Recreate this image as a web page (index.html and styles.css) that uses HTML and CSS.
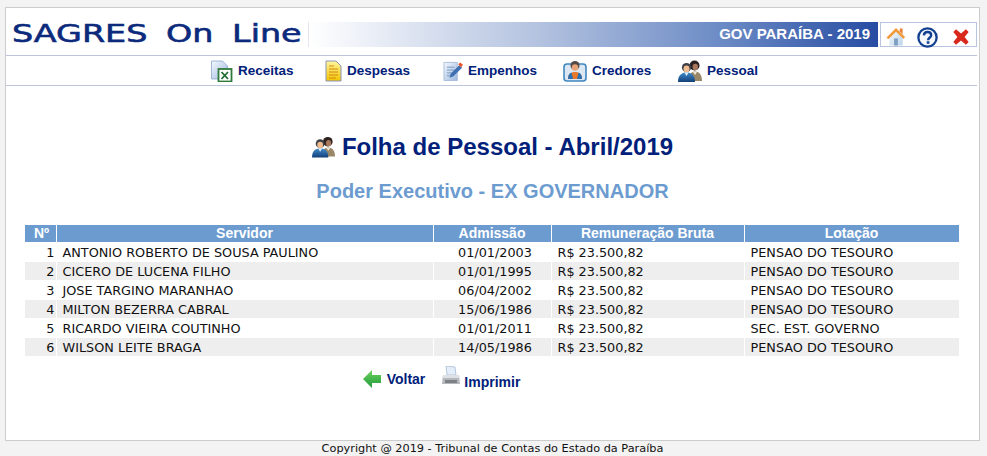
FILE: index.html
```html
<!DOCTYPE html>
<html lang="pt">
<head>
<meta charset="utf-8">
<title>Sagres On Line</title>
<link rel="stylesheet" href="styles.css">
</head>
<body>
<svg class="defs" width="0" height="0" aria-hidden="true">
  <defs>
    <linearGradient id="gPage" x1="0" y1="0" x2="1" y2="1"><stop offset="0" stop-color="#f4f8fd"/><stop offset="1" stop-color="#9db8e0"/></linearGradient>
    <linearGradient id="gYellow" x1="0" y1="0" x2="0" y2="1"><stop offset="0" stop-color="#fff6a0"/><stop offset="1" stop-color="#f2c400"/></linearGradient>
    <linearGradient id="gGreen" x1="0" y1="0" x2="0" y2="1"><stop offset="0" stop-color="#6fd35f"/><stop offset="1" stop-color="#1f9a3a"/></linearGradient>
    <linearGradient id="gSuit" x1="0" y1="0" x2="0" y2="1"><stop offset="0" stop-color="#3f8ccc"/><stop offset="1" stop-color="#123f78"/></linearGradient>
    <linearGradient id="gWall" x1="0" y1="0" x2="1" y2="1"><stop offset="0" stop-color="#f6fafd"/><stop offset="1" stop-color="#bcd4ea"/></linearGradient>
    <symbol id="people" viewBox="0 0 24 22">
      <path d="M10 21c0-6 3-9.500 7-9.500s7 3 7 9.500z" fill="#9a8768"/>
      <circle cx="16.500" cy="5.500" r="5" fill="#2c211e"/>
      <ellipse cx="17.300" cy="7" rx="2.700" ry="3.300" fill="#a8785c"/>
      <path d="M15 12l2 3 2-3z" fill="#efe7d8"/>
      <circle cx="8.500" cy="7.500" r="4.600" fill="#3d4046"/>
      <ellipse cx="8.500" cy="9" rx="3" ry="3.400" fill="#f0bd92"/>
      <path d="M0 22c0-7 3.500-9.500 8.500-9.500s8.500 2.500 8.500 9.500z" fill="url(#gSuit)"/>
      <path d="M6.500 12.500l2 3.500 2-3.500z" fill="#e9f0f8"/>
    </symbol>
  </defs>
</svg>
<main class="panel">
  <header class="top">
    <div class="logo"><span class="logo-text">SAGRES On Line</span></div>
    <div class="banner">GOV PARAÍBA - 2019</div>
    <div class="tools">
      <svg class="tool tool-home" viewBox="0 0 20 20" aria-label="Início">
        <path d="M3 10l7-6 7 6v9.500H3z" fill="url(#gWall)"/>
        <path d="M0 11L10 1l9.500 9.500-1.500 2L10 5l-8 8z" fill="#f2993a"/>
        <path d="M14 1.500h3v6l-3-3z" fill="#e8823a"/>
        <rect x="8" y="12" width="4" height="7.500" fill="#7f9fc0"/>
      </svg>
      <svg class="tool tool-help" viewBox="0 0 20 20" aria-label="Ajuda">
        <circle cx="10" cy="10" r="8.700" fill="#f4f8fc" stroke="#123f8f" stroke-width="2.200"/>
        <path d="M6.600 8C6.700 5.700 8.200 4.800 10 4.800c2.100 0 3.500 1.200 3.500 3 0 2.500-2.900 2.400-2.900 4.700" fill="none" stroke="#123f8f" stroke-width="2.300"/>
        <rect x="9.300" y="13.600" width="2.500" height="2.400" fill="#123f8f"/>
      </svg>
      <svg class="tool tool-x" viewBox="0 0 20 20" aria-label="Sair">
        <path d="M4.500 1.500L10 6l5.500-4.500 3 3-4.500 5.500 4.500 5.500-3 3L10 14l-5.500 4.500-3-3L6 10 1.500 4.500z" fill="#d9281c"/>
      </svg>
    </div>
  </header>
  <nav class="nav">
    <a class="nav-item">
      <svg class="nav-icon" viewBox="0 0 22 22"><path d="M1 1h11l5 5v13H1z" fill="url(#gPage)" stroke="#8ea6cc" stroke-width=".8"/><rect x="8" y="9" width="13" height="12.500" fill="#fff" stroke="#2f7a3a" stroke-width="1.800"/><path d="M11 12l6.500 7M17.500 12L11 19" stroke="#1f6b30" stroke-width="1.800"/></svg>
      <span>Receitas</span>
    </a>
    <a class="nav-item">
      <svg class="nav-icon nav-icon-doc" viewBox="0 0 17 22"><path d="M1 1h10l5 5v15H1z" fill="url(#gYellow)" stroke="#8a93b8" stroke-width="1"/><path d="M4 6h5M4 9h9M4 12h9M4 15h9M4 18h7" stroke="#d68a10" stroke-width="1.200"/></svg>
      <span>Despesas</span>
    </a>
    <a class="nav-item">
      <svg class="nav-icon nav-icon-edit" viewBox="0 0 21 22"><path d="M1 2h14v19H1z" fill="url(#gPage)" stroke="#9db2d2" stroke-width=".8"/><path d="M4 7h8M4 10h8M4 13h5M4 16h4" stroke="#6f8fb8" stroke-width=".9"/><path d="M7 18l1-4 9-9 3 2.500-9 9z" fill="#3f6fb0"/><path d="M16 4l2-2 3 2.500-2 2.500z" fill="#e8542c"/></svg>
      <span>Empenhos</span>
    </a>
    <a class="nav-item">
      <svg class="nav-icon nav-icon-card" viewBox="0 0 24 22"><rect x="1" y="4" width="22" height="17" rx="3" fill="#dbe7f2" stroke="#3f86bd" stroke-width="1.600"/><circle cx="12" cy="5.500" r="4.500" fill="#514a46"/><circle cx="12" cy="7.500" r="3.200" fill="#e8a577"/><path d="M5 19c0-5 3-7 7-7s7 2 7 7z" fill="#e8782a"/><path d="M5 19c0-4 1.500-6 3.500-6.500L10 19zM19 19c0-4-1.500-6-3.500-6.500L14 19z" fill="#2a70b0"/></svg>
      <span>Credores</span>
    </a>
    <a class="nav-item">
      <svg class="nav-icon nav-icon-card"><use href="#people"/></svg>
      <span>Pessoal</span>
    </a>
  </nav>
  <section class="content">
    <h1 class="title"><svg class="title-icon"><use href="#people"/></svg>Folha de Pessoal - Abril/2019</h1>
    <h2 class="subtitle">Poder Executivo - EX GOVERNADOR</h2>
    <table class="grid">
      <thead>
        <tr><th class="c-n">Nº</th><th class="c-s">Servidor</th><th class="c-a">Admissão</th><th class="c-r">Remuneração Bruta</th><th>Lotação</th></tr>
      </thead>
      <tbody>
        <tr><td class="num">1</td><td class="name">ANTONIO ROBERTO DE SOUSA PAULINO</td><td class="mid">01/01/2003</td><td>R$ 23.500,82</td><td>PENSAO DO TESOURO</td></tr>
        <tr><td class="num">2</td><td class="name">CICERO DE LUCENA FILHO</td><td class="mid">01/01/1995</td><td>R$ 23.500,82</td><td>PENSAO DO TESOURO</td></tr>
        <tr><td class="num">3</td><td class="name">JOSE TARGINO MARANHAO</td><td class="mid">06/04/2002</td><td>R$ 23.500,82</td><td>PENSAO DO TESOURO</td></tr>
        <tr><td class="num">4</td><td class="name">MILTON BEZERRA CABRAL</td><td class="mid">15/06/1986</td><td>R$ 23.500,82</td><td>PENSAO DO TESOURO</td></tr>
        <tr><td class="num">5</td><td class="name">RICARDO VIEIRA COUTINHO</td><td class="mid">01/01/2011</td><td>R$ 23.500,82</td><td>SEC. EST. GOVERNO</td></tr>
        <tr><td class="num">6</td><td class="name">WILSON LEITE BRAGA</td><td class="mid">14/05/1986</td><td>R$ 23.500,82</td><td>PENSAO DO TESOURO</td></tr>
      </tbody>
    </table>
    <div class="actions">
      <a class="act act-back">
        <svg class="act-arrow" viewBox="0 0 18 18"><path d="M0 9l9-9v5h9v8H9v5z" fill="url(#gGreen)"/></svg>
        <span>Voltar</span>
      </a>
      <a class="act act-print">
        <svg class="act-printer" viewBox="0 0 18 20"><path d="M4 0l9 1 1 8H5z" fill="#e4eefa" stroke="#9bb3d0" stroke-width=".7"/><path d="M1 9h16l1 9H0z" fill="#b4b8bc"/><path d="M1 9h16l.4 3H.6z" fill="#dfe2e4"/><rect x="3" y="14" width="12" height="3" fill="#7d8286"/></svg>
        <span>Imprimir</span>
      </a>
    </div>
  </section>
</main>
<footer class="copy">Copyright @ 2019 - Tribunal de Contas do Estado da Paraíba</footer>
</body>
</html>
```
FILE: styles.css
```css
html, body { margin: 0; padding: 0; }
body { background: #f3f3f3; height: 456px; overflow: hidden; font-family: "Liberation Sans", Arial, sans-serif; }
.defs { display: block; height: 0; }
.panel { box-sizing: border-box; width: 975px; height: 434px; margin: 7px 0 0 5px; background: #fff; border: 1px solid #ccc; }
.top { display: flex; align-items: flex-start; box-sizing: border-box; height: 48px; padding: 14px 2px 0 0; margin-right: 2px; border-bottom: 1px solid #bcc5da; }
.logo { width: 302px; height: 25px; border-right: 1px solid #e6e6ee; flex: none; }
.logo-text { display: inline-block; margin-left: 6px; font: 25px/24px "DejaVu Sans", sans-serif; color: #0b2a7c; -webkit-text-stroke: .6px #0b2a7c; white-space: nowrap; word-spacing: 6px; transform: scaleX(1.335); transform-origin: 0 50%; }
.banner { flex: none; width: 569px; height: 25px; box-sizing: border-box; padding-right: 8px; text-align: right; font: bold 15px/24px "Liberation Sans", Arial, sans-serif; color: #fff; background: linear-gradient(90deg, #fff 0%, #b4c3e0 40%, #6d8cc6 72%, #274ca2 100%); }
.tools { flex: none; box-sizing: border-box; width: 97px; height: 25px; margin-left: 2px; border: 1px solid #b9c4e0; display: flex; align-items: center; padding-left: 5px; }
.tool { flex: none; }
.tool-home { width: 20px; height: 19px; margin-top: 3px; }
.tool-help { width: 21px; height: 21px; margin: 5px 0 0 11px; }
.tool-x { width: 18px; height: 18px; margin: 5px 0 0 14px; }
.nav { display: grid; grid-template-columns: 115px 118px 120px 115px 90px; height: 29px; padding-left: 204px; margin-right: 2px; border-bottom: 1px solid #bcc5da; align-items: center; }
.nav-item { display: flex; align-items: center; gap: 5px; font: bold 13.5px/16px "Liberation Sans", Arial, sans-serif; color: #00207a; }
.nav-icon { width: 23px; height: 22px; flex: none; }
.nav-icon-doc { width: 17px; }
.nav-icon-edit { width: 20px; }
.nav-icon-card { width: 24px; }
.content { display: flex; flex-direction: column; align-items: center; }
.title { margin: 46px 0 0; font: bold 24px/30px "Liberation Sans", Arial, sans-serif; color: #00207a; display: flex; align-items: center; gap: 7px; }
.title-icon { width: 23px; height: 22px; }
.subtitle { margin: 16px 0 0; font: bold 20px/26px "Liberation Sans", Arial, sans-serif; color: #6c9bd0; }
.grid { margin: 20px 2px 0 0; width: 936px; border-collapse: separate; border-spacing: 1px; table-layout: fixed; }
.grid th { background: #6c9bd0; color: #fff; height: 17px; padding: 0; font: bold 14px/17px "Liberation Sans", Arial, sans-serif; }
.grid th.c-n { text-indent: 3px; }
.c-n { width: 31px; }
.c-s { width: 376px; }
.c-a { width: 117px; }
.c-r { width: 192px; }
.grid td { box-sizing: border-box; height: 18px; padding: 1px 0 0 6px; font: 12.8px/17px "DejaVu Sans", Verdana, sans-serif; color: #111; white-space: nowrap; }
.grid tbody tr:nth-child(even) td { background: #eee; }
.grid td.num { text-align: right; padding: 1px 1px 0 0; }
.grid td.mid { text-align: center; }
.actions { display: flex; align-items: flex-start; gap: 17px; margin: 8px 0 0 -102px; height: 40px; font: bold 14px/16px "Liberation Sans", Arial, sans-serif; color: #00207a; }
.act { display: flex; }
.act-back { align-items: center; gap: 6px; margin-top: 5px; }
.act-print { gap: 4px; align-items: flex-end; margin-top: 1px; }
.act-arrow { width: 18px; height: 18px; }
.act-printer { width: 18px; height: 20px; margin-bottom: 4px; }
.copy { position: absolute; left: 0; right: 2px; top: 441px; text-align: center; font: 11.3px/15px "DejaVu Sans", Verdana, sans-serif; color: #111; }
```
